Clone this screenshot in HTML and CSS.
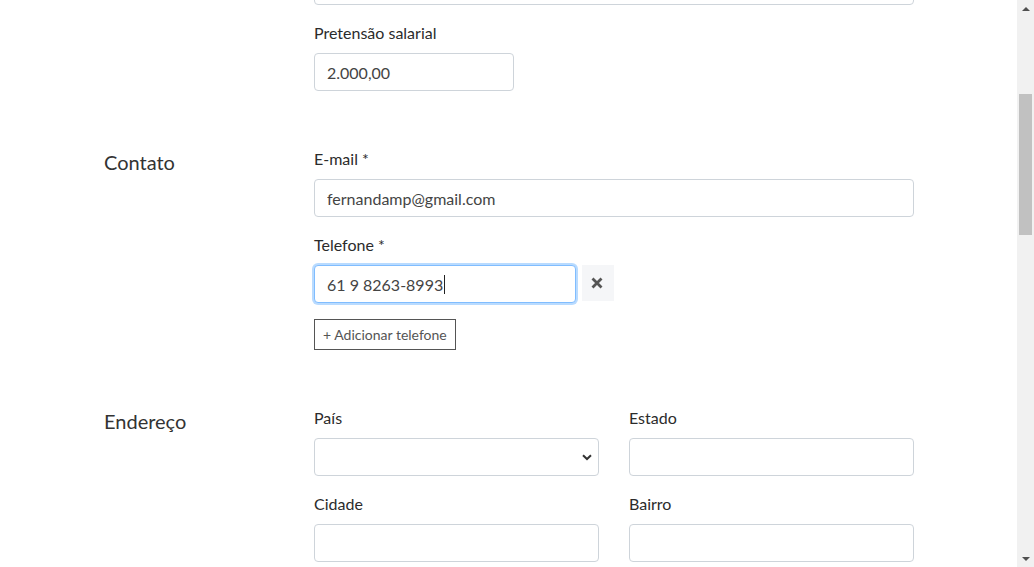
FILE: index.html
```html
<!DOCTYPE html>
<html lang="pt-BR">
<head>
<meta charset="utf-8">
<title>Formulário</title>
<link rel="stylesheet" href="styles.css">
</head>
<body>
<div class="window">
  <main class="page">
    <div class="content">
      <section class="section">
        <div class="section-title"></div>
        <div class="fields">
          <div class="group">
            <input class="input" type="text" value="">
          </div>
          <div class="group">
            <label class="label">Pretensão salarial</label>
            <input class="input input-sm" type="text" value="2.000,00">
          </div>
        </div>
      </section>

      <section class="section">
        <h2 class="section-title">Contato</h2>
        <div class="fields">
          <div class="group">
            <label class="label">E-mail *</label>
            <input class="input" type="text" value="fernandamp@gmail.com">
          </div>
          <div class="group">
            <label class="label">Telefone *</label>
            <div class="phone-row">
              <div class="input input-phone focused">61 9 8263-8993<span class="caret"></span></div>
              <button class="remove" type="button" aria-label="Remover">
                <svg width="12" height="12" viewBox="0 0 12 12"><path d="M1.5 1.5 L10.5 10.5 M10.5 1.5 L1.5 10.5" stroke="#555" stroke-width="2.8" stroke-linecap="butt"/></svg>
              </button>
            </div>
            <button class="add-btn" type="button">+ Adicionar telefone</button>
          </div>
        </div>
      </section>

      <section class="section">
        <h2 class="section-title">Endereço</h2>
        <div class="fields grid2">
          <div class="group">
            <label class="label">País</label>
            <div class="select">
              <svg class="chev" width="10" height="7" viewBox="0 0 10 7"><path d="M1 1.2 L5 5 L9 1.2" fill="none" stroke="#333" stroke-width="2"/></svg>
            </div>
          </div>
          <div class="group">
            <label class="label">Estado</label>
            <input class="input" type="text">
          </div>
          <div class="group">
            <label class="label">Cidade</label>
            <input class="input" type="text">
          </div>
          <div class="group">
            <label class="label">Bairro</label>
            <input class="input" type="text">
          </div>
        </div>
      </section>
    </div>
  </main>
  <div class="scrollbar">
    <div class="sb-arrow sb-up"></div>
    <div class="sb-track"><div class="sb-thumb"></div></div>
    <div class="sb-arrow sb-down"></div>
  </div>
</div>
</body>
</html>
```

FILE: styles.css
```css
* { box-sizing: border-box; }
html, body {
  margin: 0;
  height: 567px;
  overflow: hidden;
  background: #fff;
  font-family: Lato, "Liberation Sans", sans-serif;
  color: #333;
}
.window {
  display: flex;
  height: 567px;
}
.page {
  flex: 1;
  overflow: hidden;
}
.content {
  margin-top: -33px;
  padding-left: 104px;
}
.section {
  display: grid;
  grid-template-columns: 210px 600px;
  margin-bottom: 40px;
}
.section-title {
  margin: 0;
  font-size: 20px;
  font-weight: 400;
  line-height: 26px;
  color: #333;
}
.group {
  display: flex;
  flex-direction: column;
  align-items: flex-start;
  margin-bottom: 18px;
}
.label {
  display: block;
  font-size: 16px;
  line-height: 20px;
  margin-bottom: 10px;
  color: #2b2b2b;
}
.input {
  display: block;
  width: 100%;
  height: 38px;
  border: 1px solid #ced4da;
  border-radius: 4px;
  padding: 0 12px;
  font-family: Lato, "Liberation Sans", sans-serif;
  font-size: 16px;
  color: #444;
  background: #fff;
  outline: none;
}
.input-sm { width: 200px; }
.phone-row {
  display: flex;
  align-items: flex-start;
  gap: 6px;
}
.input-phone {
  width: 262px;
  display: flex;
  align-items: center;
  border-color: #80bdff;
  box-shadow: 0 0 0 2px rgba(128, 189, 255, 0.55);
}
.caret {
  display: inline-block;
  width: 1px;
  height: 19px;
  background: #222;
  margin-left: 1px;
}
.remove {
  width: 32px;
  height: 36px;
  border: none;
  background: #f5f6f8;
  display: flex;
  align-items: center;
  justify-content: center;
  padding: 0 2px 0 0;
}
.add-btn {
  margin-top: 16px;
  height: 31px;
  padding: 0 8px;
  border: 1px solid #555;
  border-radius: 0;
  background: #fff;
  color: #555;
  font-family: Lato, "Liberation Sans", sans-serif;
  font-size: 14px;
}
.grid2 {
  display: grid;
  grid-template-columns: 285px 285px;
  column-gap: 30px;
}
.select {
  position: relative;
  width: 100%;
  height: 38px;
  border: 1px solid #ced4da;
  border-radius: 4px;
  background: #fff;
}
.chev {
  position: absolute;
  right: 6px;
  top: 15px;
}
.scrollbar {
  width: 17px;
  height: 567px;
  background: #f1f1f1;
  display: flex;
  flex-direction: column;
}
.sb-arrow {
  height: 17px;
  display: flex;
  align-items: center;
  justify-content: center;
}
.sb-up::before {
  content: "";
  border-left: 4px solid transparent;
  border-right: 4px solid transparent;
  border-bottom: 4px solid #505050;
}
.sb-down::before {
  content: "";
  border-left: 4px solid transparent;
  border-right: 4px solid transparent;
  border-top: 4px solid #505050;
}
.sb-track {
  flex: 1;
  padding-top: 77px;
  display: flex;
  justify-content: center;
}
.sb-thumb {
  width: 13px;
  height: 141px;
  background: #c1c1c1;
}
```
